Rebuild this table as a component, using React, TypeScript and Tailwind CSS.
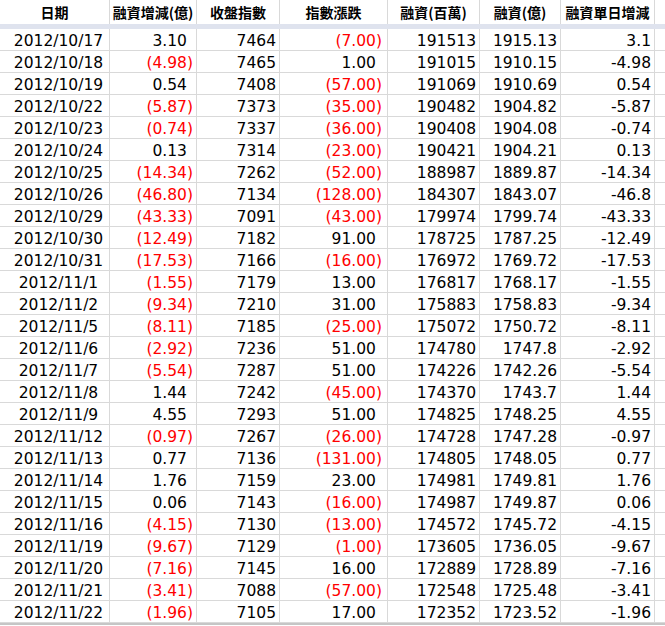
// Margin-financing sheet, Excel-style grid
const rows: string[][] = [
  ["2012/10/17", "3.10", "7464", "(7.00)", "191513", "1915.13", "3.1"],
  ["2012/10/18", "(4.98)", "7465", "1.00", "191015", "1910.15", "-4.98"],
  ["2012/10/19", "0.54", "7408", "(57.00)", "191069", "1910.69", "0.54"],
  ["2012/10/22", "(5.87)", "7373", "(35.00)", "190482", "1904.82", "-5.87"],
  ["2012/10/23", "(0.74)", "7337", "(36.00)", "190408", "1904.08", "-0.74"],
  ["2012/10/24", "0.13", "7314", "(23.00)", "190421", "1904.21", "0.13"],
  ["2012/10/25", "(14.34)", "7262", "(52.00)", "188987", "1889.87", "-14.34"],
  ["2012/10/26", "(46.80)", "7134", "(128.00)", "184307", "1843.07", "-46.8"],
  ["2012/10/29", "(43.33)", "7091", "(43.00)", "179974", "1799.74", "-43.33"],
  ["2012/10/30", "(12.49)", "7182", "91.00", "178725", "1787.25", "-12.49"],
  ["2012/10/31", "(17.53)", "7166", "(16.00)", "176972", "1769.72", "-17.53"],
  ["2012/11/1", "(1.55)", "7179", "13.00", "176817", "1768.17", "-1.55"],
  ["2012/11/2", "(9.34)", "7210", "31.00", "175883", "1758.83", "-9.34"],
  ["2012/11/5", "(8.11)", "7185", "(25.00)", "175072", "1750.72", "-8.11"],
  ["2012/11/6", "(2.92)", "7236", "51.00", "174780", "1747.8", "-2.92"],
  ["2012/11/7", "(5.54)", "7287", "51.00", "174226", "1742.26", "-5.54"],
  ["2012/11/8", "1.44", "7242", "(45.00)", "174370", "1743.7", "1.44"],
  ["2012/11/9", "4.55", "7293", "51.00", "174825", "1748.25", "4.55"],
  ["2012/11/12", "(0.97)", "7267", "(26.00)", "174728", "1747.28", "-0.97"],
  ["2012/11/13", "0.77", "7136", "(131.00)", "174805", "1748.05", "0.77"],
  ["2012/11/14", "1.76", "7159", "23.00", "174981", "1749.81", "1.76"],
  ["2012/11/15", "0.06", "7143", "(16.00)", "174987", "1749.87", "0.06"],
  ["2012/11/16", "(4.15)", "7130", "(13.00)", "174572", "1745.72", "-4.15"],
  ["2012/11/19", "(9.67)", "7129", "(1.00)", "173605", "1736.05", "-9.67"],
  ["2012/11/20", "(7.16)", "7145", "16.00", "172889", "1728.89", "-7.16"],
  ["2012/11/21", "(3.41)", "7088", "(57.00)", "172548", "1725.48", "-3.41"],
  ["2012/11/22", "(1.96)", "7105", "17.00", "172352", "1723.52", "-1.96"],
];

const headers = ["日期", "融資增減(億)", "收盤指數", "指數漲跌", "融資(百萬)", "融資(億)", "融資單日增減"];

const cols = "grid grid-cols-[110px_87px_83px_108px_92px_81px_94px_1fr]";

function Cell({ value, col }: { value: string; col: number }) {
  // accounting columns: negatives in red parentheses, positives keep a hidden ")"
  const accounting = col === 1 || col === 3;
  const negative = accounting && value.startsWith("(");
  if (col === 0) {
    return (
      <div className="flex h-[22px] items-center justify-center border-r border-b border-[#d9d9d9] pt-[5px] pl-2 leading-none">
        {value}
      </div>
    );
  }
  return (
    <div
      className={`flex h-[22px] items-center justify-end border-r border-b border-[#d9d9d9] pt-[5px] leading-none ${
        col === 3 ? "pr-[5px]" : "pr-[3px]"
      } ${negative ? "text-[#ff0000]" : ""}`}
    >
      {value}
      {accounting && !negative && <span className="invisible">)</span>}
    </div>
  );
}

export default function App() {
  return (
    <div className="h-[626px] w-[665px] overflow-hidden bg-white text-[15.5px] text-black [font-family:'DejaVu_Sans',sans-serif]">
      <div className={`${cols} h-[24px]`}>
        {headers.map((h) => (
          <div
            key={h}
            className="flex items-center justify-center border-r border-[#d9d9d9] text-[14px] font-bold [font-family:'Noto_Sans_CJK_TC',sans-serif]"
          >
            {h}
          </div>
        ))}
        <div />
      </div>
      <div className="h-[5px] bg-[#dfe3ee]" />
      {rows.map((r) => (
        <div key={r[0]} className={cols}>
          {r.map((v, i) => (
            <Cell key={i} value={v} col={i} />
          ))}
          <div className="h-[22px] border-b border-[#d9d9d9]" />
        </div>
      ))}
      <div className="h-[2px] bg-[#c6c6c6]" />
    </div>
  );
}
